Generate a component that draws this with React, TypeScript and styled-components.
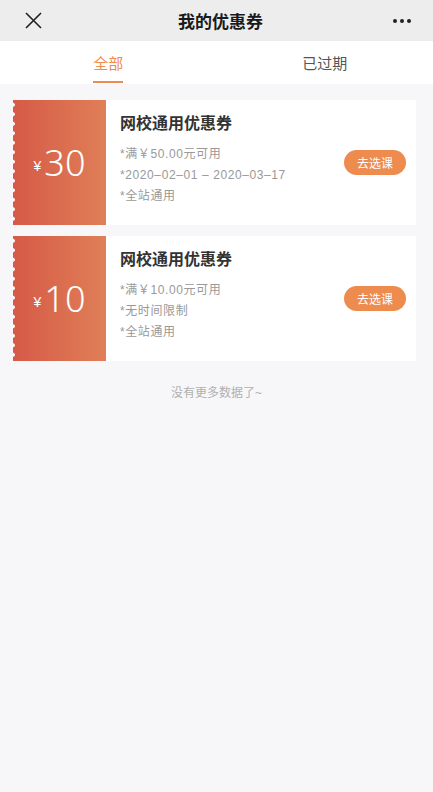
import React from "react";
import styled, { createGlobalStyle } from "styled-components";

const GlobalStyle = createGlobalStyle`
  html, body {
    margin: 0;
    padding: 0;
    background: #f7f7f9;
    font-family: "Liberation Sans", "Noto Sans CJK SC", sans-serif;
  }
`;

const Page = styled.div`
  min-height: 792px;
  background: #f7f7f9;
`;

const NavBar = styled.div`
  height: 41px;
  background: #ededed;
  display: flex;
  align-items: center;
  justify-content: space-between;
  padding: 0 20px 0 22px;
`;

const NavTitle = styled.div`
  font-size: 17px;
  font-weight: 700;
  color: #1a1a1a;
  margin-left: 6px;
`;

const IconButton = styled.div`
  width: 22px;
  height: 22px;
  display: flex;
  align-items: center;
  justify-content: center;
`;

const Tabs = styled.div`
  display: flex;
  height: 43px;
  background: #fff;
`;

const Tab = styled.div<{ $active?: boolean }>`
  flex: 1;
  position: relative;
  display: flex;
  align-items: center;
  justify-content: center;
  font-size: 15px;
  color: ${(p) => (p.$active ? "#ee8b4e" : "#555")};

  &::after {
    content: "";
    display: ${(p) => (p.$active ? "block" : "none")};
    position: absolute;
    bottom: 1px;
    left: 50%;
    width: 30px;
    margin-left: -15px;
    height: 2px;
    background: #ee8b4e;
  }
`;

const List = styled.div`
  padding: 16px 17px 0 13px;
  display: flex;
  flex-direction: column;
  gap: 11px;
`;

const Card = styled.div`
  height: 125px;
  background: #fff;
  display: flex;
`;

const Amount = styled.div`
  position: relative;
  width: 93px;
  flex-shrink: 0;
  display: flex;
  align-items: center;
  justify-content: center;
  color: #fff;
  background: linear-gradient(90deg, #d65a47 0%, #df7f57 100%);

  &::before {
    content: "";
    position: absolute;
    left: 0;
    top: 0;
    bottom: 0;
    width: 3px;
    background: radial-gradient(circle at 0 50%, #f7f7f9 1.6px, transparent 2.2px);
    background-size: 3px 9.5px;
  }
`;

const Yen = styled.span`
  font-size: 14px;
  margin-right: 3px;
  margin-top: 6px;
`;

const Value = styled.span`
  font-family: "Noto Sans", "Liberation Sans", sans-serif;
  font-size: 36px;
  font-weight: 300;
  line-height: 1;
`;

const Body = styled.div`
  flex: 1;
  display: flex;
  align-items: center;
  padding: 0 10px 0 14px;
`;

const Info = styled.div`
  flex: 1;
  align-self: flex-start;
  padding-top: 13px;
`;

const Title = styled.div`
  font-size: 16px;
  font-weight: 700;
  color: #333;
  line-height: 22px;
  margin-bottom: 9px;
`;

const Line = styled.div`
  font-size: 12px;
  letter-spacing: 0.6px;
  color: #999;
  line-height: 21px;
`;

const Action = styled.button`
  border: none;
  height: 25px;
  width: 62px;
  border-radius: 13px;
  background: #ee8b4e;
  color: #fff;
  font-size: 12px;
  font-family: inherit;
  padding: 0;
`;

const Footer = styled.div`
  text-align: center;
  font-size: 12px;
  color: #b0b0b0;
  padding-top: 22px;
`;

type Coupon = { value: number; min: string; lines: string[] };

const coupons: Coupon[] = [
  { value: 30, min: "50.00", lines: ["*2020–02–01 – 2020–03–17", "*全站通用"] },
  { value: 10, min: "10.00", lines: ["*无时间限制", "*全站通用"] },
];

export default function App() {
  return (
    <Page>
      <GlobalStyle />
      <NavBar>
        <IconButton>
          <svg width="17" height="17" viewBox="0 0 17 17">
            <path d="M1 1 L16 16 M16 1 L1 16" stroke="#222" strokeWidth="1.6" />
          </svg>
        </IconButton>
        <NavTitle>我的优惠券</NavTitle>
        <IconButton>
          <svg width="20" height="6" viewBox="0 0 20 6">
            <circle cx="3" cy="3" r="2" fill="#222" />
            <circle cx="10" cy="3" r="2" fill="#222" />
            <circle cx="17" cy="3" r="2" fill="#222" />
          </svg>
        </IconButton>
      </NavBar>
      <Tabs>
        <Tab $active>全部</Tab>
        <Tab>已过期</Tab>
      </Tabs>
      <List>
        {coupons.map((c) => (
          <Card key={c.value}>
            <Amount>
              <Yen>¥</Yen>
              <Value>{c.value}</Value>
            </Amount>
            <Body>
              <Info>
                <Title>网校通用优惠券</Title>
                <Line>*满￥{c.min}元可用</Line>
                {c.lines.map((l) => (
                  <Line key={l}>{l}</Line>
                ))}
              </Info>
              <Action>去选课</Action>
            </Body>
          </Card>
        ))}
      </List>
      <Footer>没有更多数据了~</Footer>
    </Page>
  );
}
